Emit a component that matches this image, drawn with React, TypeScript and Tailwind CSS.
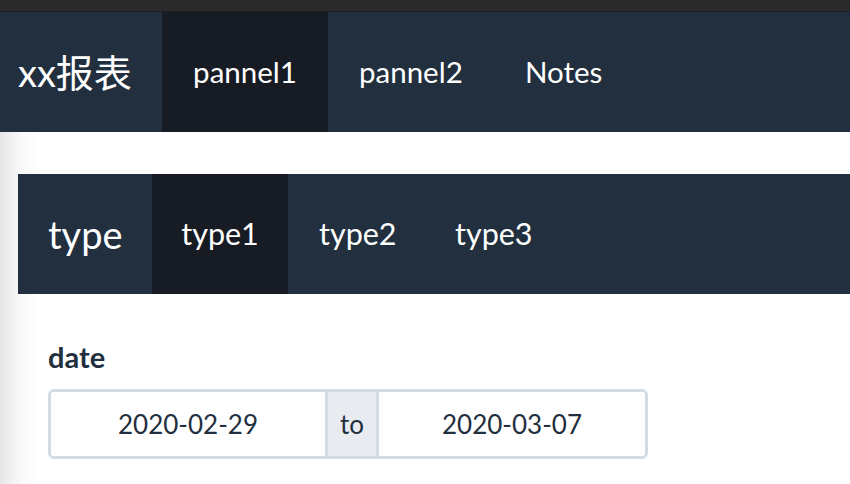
const font = "font-['Lato','Noto_Sans_CJK_SC',sans-serif]";

function NavItem({ label, active, className }: { label: string; active?: boolean; className: string }) {
  return (
    <div
      className={`flex h-full items-center text-white ${className} ${active ? "bg-[#171c24]" : ""}`}
    >
      {label}
    </div>
  );
}

export default function App() {
  return (
    <div className={`${font} h-[484px] w-[850px] overflow-hidden bg-white`}>
      <div className="h-[12px] border-b border-[#1e1e1e] bg-[#2a2a2a]" />
      <nav className="flex h-[120px] items-center bg-[#222f3e]">
        <div className="flex h-full w-[162px] items-center pl-[18px] text-[38px] leading-none text-white">
          xx报表
        </div>
        <NavItem label="pannel1" active className="w-[166px] justify-center text-[29.5px]" />
        <NavItem label="pannel2" className="w-[166px] pl-[31px] text-[29.5px]" />
        <NavItem label="Notes" className="pl-[31px] text-[29.5px]" />
      </nav>
      <main className="h-[352px] bg-[linear-gradient(to_right,#e6e6e6,#fafafa_22px,#ffffff_40px)] pl-[18px] pt-[42px]">
        <div className="flex h-[120px] items-center bg-[#222f3e]">
          <div className="flex h-full w-[134px] items-center pl-[30px] text-[38px] text-white">type</div>
          <NavItem label="type1" active className="w-[136px] justify-center text-[30.5px]" />
          <NavItem label="type2" className="w-[136px] pl-[31px] text-[30.5px]" />
          <NavItem label="type3" className="pl-[31px] text-[30.5px]" />
        </div>
        <div className="pl-[30px] pt-[48px]">
          <div className="text-[29px] font-bold leading-none text-[#222f3e]">date</div>
          <div className="mt-[18px] flex h-[70px] w-[600px] rounded-md border-[3px] border-[#d3dbe3] text-[26px] text-[#222f3e]">
            <div className="flex w-[274px] items-center justify-center rounded-l-sm bg-white">2020-02-29</div>
            <div className="flex w-[54px] items-center justify-center border-x-[3px] border-[#d3dbe3] bg-[#e8ebef]">
              to
            </div>
            <div className="flex flex-1 items-center justify-center rounded-r-sm bg-white">2020-03-07</div>
          </div>
        </div>
      </main>
    </div>
  );
}
